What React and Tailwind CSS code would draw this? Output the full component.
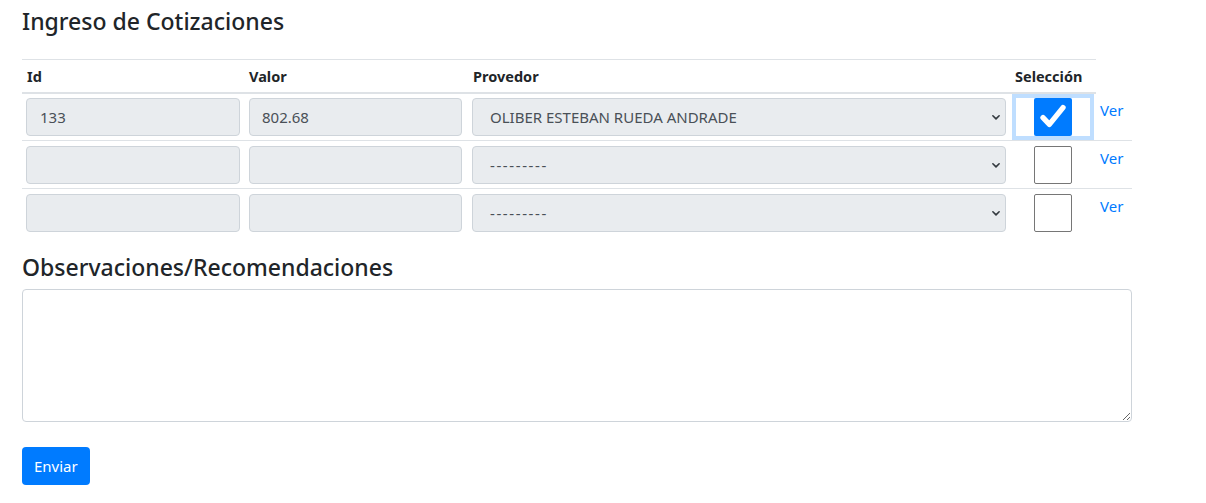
import { useState } from "react";

const rows = [
    { id: "133", valor: "802.68", proveedor: "OLIBER ESTEBAN RUEDA ANDRADE", checked: true },
    { id: "", valor: "", proveedor: "---------", checked: false },
    { id: "", valor: "", proveedor: "---------", checked: false },
];

const Chevron = () => (
    <svg className="w-[10px] h-[10px] text-[#343a40]" viewBox="0 0 16 16" fill="none" stroke="currentColor" strokeWidth="2.6" strokeLinecap="round" strokeLinejoin="round">
        <path d="M3 6l5 5 5-5" />
    </svg>
);

const Box = ({ children, className = "" }) => (
    <div className={`h-[38px] flex items-center bg-[#e9ecef] border border-[#ced4da] rounded-[4px] text-[15px] text-[#495057] ${className}`}>
        {children}
    </div>
);

const App = () => {
    const [obs, setObs] = useState("");

    return (
        <div className="px-[22px] pt-[7px] font-['Noto_Sans',sans-serif] text-[#212529] bg-white min-h-[503px]">
            <h3 className="text-[23px] leading-[29px] font-medium mb-[23px]">Ingreso de Cotizaciones</h3>

            <div className="w-[1110px]">
                <div className="flex w-[1074px] border-t border-b-2 border-[#dee2e6] h-[35px] items-center pt-[1px] text-[14.5px] font-bold">
                    <div className="w-[222px] pl-[5px]">Id</div>
                    <div className="w-[223px] pl-[5px]">Valor</div>
                    <div className="w-[543px] pl-[6px]">Provedor</div>
                    <div className="w-[86px] pl-[5px]">Selección</div>
                </div>

                {rows.map((r, i) => (
                    <div key={i} className={`flex pb-[4px] ${i > 0 ? "border-t border-[#dee2e6] pt-[5px]" : "pt-[4px]"}`}>
                        <div className="w-[222px] px-[4px]">
                            <Box className="px-[13px]">{r.id}</Box>
                        </div>
                        <div className="w-[223px] px-[5px]">
                            <Box className="px-[12px]">{r.valor}</Box>
                        </div>
                        <div className="w-[543px] pl-[5px] pr-[4px]">
                            <Box className="pl-[17px] pr-[4px] justify-between">
                                <span className={r.checked ? "" : "tracking-[1.6px]"}>{r.proveedor}</span>
                                <Chevron />
                            </Box>
                        </div>
                        <div className="w-[86px] flex justify-center">
                            {r.checked ? (
                                <div className="w-[82px] h-[46px] -mt-[4px] -mb-[4px] border-[4px] border-[#bfdeff] bg-white flex items-center justify-center">
                                    <div className="w-[38px] h-[38px] bg-[#007bff] rounded-[2px] flex items-center justify-center">
                                        <svg className="w-[32px] h-[32px]" viewBox="0 0 24 24" fill="none" stroke="white" strokeWidth="4" strokeLinecap="round" strokeLinejoin="round">
                                            <path d="M4.5 12.5l4.8 5L19.5 5" />
                                        </svg>
                                    </div>
                                </div>
                            ) : (
                                <div className="w-[38px] h-[38px] border border-[#767676] rounded-[2px] bg-white" />
                            )}
                        </div>
                        <div className="w-[36px] pl-[4px]">
                            <a href="#" className="text-[#007bff] text-[15px] leading-[22px]">Ver</a>
                        </div>
                    </div>
                ))}

                <h4 className="text-[23px] leading-[29px] font-medium mt-[17px] mb-[7px]">Observaciones/Recomendaciones</h4>
                <textarea
                    value={obs}
                    onChange={(e) => setObs(e.target.value)}
                    className="block w-full h-[133px] border border-[#ced4da] rounded-[4px] px-3 py-2 outline-none"
                />
                <button className="mt-[25px] h-[38px] px-[12px] bg-[#007bff] text-white text-[15px] rounded-[4px]">Enviar</button>
            </div>
        </div>
    );
};

export default App;
